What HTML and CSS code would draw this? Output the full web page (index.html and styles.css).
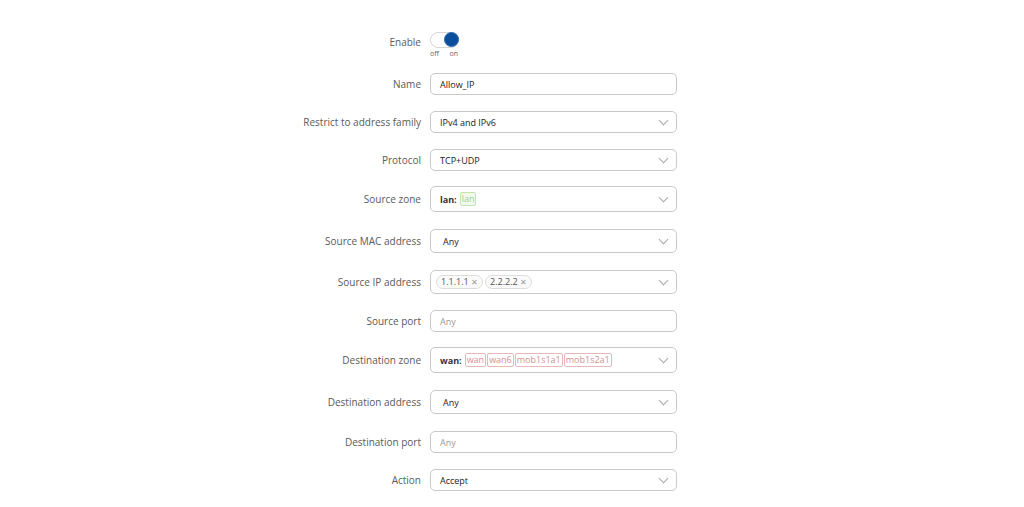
FILE: index.html
```html
<!DOCTYPE html>
<html lang="en">
<head>
    <meta charset="UTF-8">
    <title>Traffic rule</title>
    <link rel="stylesheet" href="styles.css">
</head>
<body>
    <form class="rule-form">
        <div class="row row-enable">
            <label class="lbl">Enable</label>
            <div class="switch-wrap">
                <span class="switch"><span class="knob"></span></span>
                <span class="switch-text"><span>off</span><span>on</span></span>
            </div>
        </div>

        <div class="row">
            <label class="lbl">Name</label>
            <div class="field">Allow_IP</div>
        </div>

        <div class="row">
            <label class="lbl">Restrict to address family</label>
            <div class="field select">IPv4 and IPv6<span class="chev"></span></div>
        </div>

        <div class="row">
            <label class="lbl">Protocol</label>
            <div class="field select">TCP+UDP<span class="chev"></span></div>
        </div>

        <div class="row g15">
            <label class="lbl">Source zone</label>
            <div class="field select tall">
                <b class="zone">lan:</b>
                <span class="tag tag-lan">lan</span>
                <span class="chev"></span>
            </div>
        </div>

        <div class="row g17">
            <label class="lbl">Source MAC address</label>
            <div class="field select mid pad">Any<span class="chev"></span></div>
        </div>

        <div class="row g17">
            <label class="lbl">Source IP address</label>
            <div class="field select mid chips">
                <span class="chip">1.1.1.1 <i>&#x2715;</i></span>
                <span class="chip">2.2.2.2 <i>&#x2715;</i></span>
                <span class="chev"></span>
            </div>
        </div>

        <div class="row">
            <label class="lbl">Source port</label>
            <div class="field placeholder">Any</div>
        </div>

        <div class="row g15">
            <label class="lbl">Destination zone</label>
            <div class="field select tall">
                <b class="zone">wan:</b>
                <span class="tag tag-wan">wan</span>
                <span class="tag tag-wan">wan6</span>
                <span class="tag tag-wan">mob1s1a1</span>
                <span class="tag tag-wan">mob1s2a1</span>
                <span class="chev"></span>
            </div>
        </div>

        <div class="row g17">
            <label class="lbl">Destination address</label>
            <div class="field select mid pad">Any<span class="chev"></span></div>
        </div>

        <div class="row g17">
            <label class="lbl">Destination port</label>
            <div class="field placeholder">Any</div>
        </div>

        <div class="row">
            <label class="lbl">Action</label>
            <div class="field select">Accept<span class="chev"></span></div>
        </div>
    </form>
</body>
</html>
```

FILE: styles.css
```css
body {
    margin: 0;
    background: #fff;
    font-family: "Open Sans", Arial, sans-serif;
    color: #333;
}
.rule-form {
    display: flex;
    flex-direction: column;
    gap: 16px;
    padding-top: 32px;
}
.row {
    display: grid;
    grid-template-columns: 421px 247px;
    column-gap: 9px;
    align-items: center;
}
.row.g15 {
    margin-top: -1px;
}
.row.g17 {
    margin-top: 1px;
}
.row-enable {
    align-items: start;
    margin-bottom: -1px;
}
.lbl {
    text-align: right;
    font-size: 10px;
    color: #5a5a5a;
}
.row-enable .lbl {
    padding-top: 3px;
}
.switch-wrap {
    display: flex;
    flex-direction: column;
    width: 30px;
}
.switch {
    position: relative;
    width: 27px;
    height: 14px;
    border: 1px solid #d6d6d6;
    border-radius: 8px;
    background: #fff;
}
.knob {
    position: absolute;
    right: -1px;
    top: -1px;
    width: 15px;
    height: 15px;
    border-radius: 50%;
    background: #0b4f9c;
    border: 1px solid #2b6bb5;
    box-sizing: border-box;
}
.switch-text {
    display: flex;
    justify-content: space-between;
    font-size: 7px;
    color: #666;
    line-height: 9px;
    padding-top: 1px;
    width: 28px;
}
.field {
    position: relative;
    box-sizing: border-box;
    height: 22px;
    border: 1px solid #c9c9c9;
    border-radius: 5px;
    padding: 0 9px;
    display: flex;
    align-items: center;
    font-size: 9px;
    color: #222;
}
.field.mid {
    height: 24px;
}
.field.tall {
    height: 26px;
}
.field.pad {
    padding-left: 12px;
}
.field.chips {
    padding-left: 5px;
    gap: 2px;
}
.placeholder {
    color: #999;
}
.chev {
    position: absolute;
    right: 9px;
    top: 50%;
    width: 6px;
    height: 6px;
    margin-top: -5px;
    border-right: 1px solid #aaa;
    border-bottom: 1px solid #aaa;
    transform: rotate(45deg);
}
.zone {
    font-weight: 700;
    color: #333;
    margin-right: 3px;
}
.tag {
    font-size: 9px;
    line-height: 12px;
    padding: 0 1px;
    border-radius: 2px;
    margin-right: 1px;
}
.tag-lan {
    color: #9bd38e;
    background: #f1f9ee;
    border: 1px solid #bfe4b5;
}
.tag-wan {
    color: #d48f8f;
    background: #fff;
    border: 1px solid #e6b8b8;
}
.chip {
    font-size: 9px;
    color: #555;
    line-height: 12px;
    padding: 0 4px;
    border: 1px solid #ddd;
    border-radius: 7px;
    background: #fafafa;
}
.chip i {
    font-style: normal;
    color: #999;
    font-size: 8px;
}
```
